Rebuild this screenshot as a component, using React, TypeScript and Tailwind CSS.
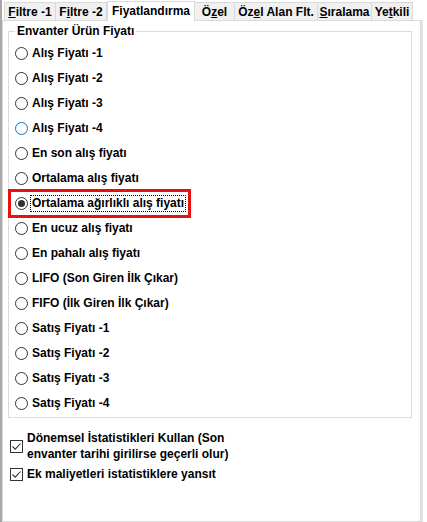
import React from "react";

const font = { fontFamily: '"Liberation Sans", Arial, sans-serif' };

const tabs: { label: React.ReactNode; w: string; active?: boolean }[] = [
    { label: <><u>F</u>iltre -1</>, w: "w-[52px]" },
    { label: <>F<u>i</u>ltre -2</>, w: "w-[52px]" },
    { label: <>Fiyatlandırma</>, w: "w-[88px]", active: true },
    { label: <>Ö<u>z</u>el</>, w: "w-[41px]" },
    { label: <>Öz<u>e</u>l Alan Flt.</>, w: "w-[84px]" },
    { label: <><u>S</u>ıralama</>, w: "w-[55px]" },
    { label: <>Ye<u>t</u>kili</>, w: "w-[42px]" },
];

const options = [
    "Alış Fiyatı -1",
    "Alış Fiyatı -2",
    "Alış Fiyatı -3",
    "Alış Fiyatı -4",
    "En son alış fiyatı",
    "Ortalama alış fiyatı",
    "Ortalama ağırlıklı alış fiyatı",
    "En ucuz alış fiyatı",
    "En pahalı alış fiyatı",
    "LIFO (Son Giren İlk Çıkar)",
    "FIFO (İlk Giren İlk Çıkar)",
    "Satış Fiyatı -1",
    "Satış Fiyatı -2",
    "Satış Fiyatı -3",
    "Satış Fiyatı -4",
];

const Radio = ({ checked, hover }: { checked?: boolean; hover?: boolean }) => (
    <span
        className={`flex items-center justify-center w-[13px] h-[13px] rounded-full border bg-white shrink-0 ${
            hover ? "border-[#0078d7]" : "border-[#333333]"
        }`}
    >
        {checked && <span className="w-[7px] h-[7px] rounded-full bg-[#333333]" />}
    </span>
);

const Check = () => (
    <span className="flex items-center justify-center w-[13px] h-[13px] border border-[#333333] bg-white shrink-0">
        <svg width="11" height="11" viewBox="0 0 11 11">
            <path d="M1.5 5.5 L4.2 8.2 L9.5 2.5" fill="none" stroke="#333333" strokeWidth="1.1" />
        </svg>
    </span>
);

export default function App() {
    return (
        <div className="w-[427px] h-[522px] bg-white flex text-black font-bold text-[12px]" style={font}>
            {/* left frame edge */}
            <div className="w-[2px] h-full bg-[#a8a8a8]" />

            <div className="w-[419px] flex flex-col">
                {/* Tab strip */}
                <div className="flex items-end h-[20px] pl-[3px]">
                    {tabs.map((t, i) =>
                        t.active ? (
                            <div
                                key={i}
                                className={`${t.w} h-[20px] -mb-px relative z-10 bg-white border border-b-0 border-[#d9d9d9] flex items-start justify-center pt-[2px] leading-[14px]`}
                            >
                                {t.label}
                            </div>
                        ) : (
                            <div
                                key={i}
                                className={`${t.w} h-[18px] bg-[#f0f0f0] border border-[#d9d9d9] border-b-0 -ml-px flex items-center justify-center leading-[14px]`}
                            >
                                {t.label}
                            </div>
                        )
                    )}
                </div>

                {/* Tab panel */}
                <div className="flex-1 border border-[#d9d9d9] bg-white flex flex-col pl-[5px] pr-[8px] pt-[10px]">
                    {/* Group box */}
                    <div className="relative border border-[#dcdcdc] h-[387px] pt-[9px]">
                        <span className="absolute -top-[8px] left-[6px] bg-white px-[2px] leading-[14px]">
                            Envanter Ürün Fiyatı
                        </span>
                        <div className="flex flex-col">
                            {options.map((o, i) => {
                                const selected = i === 6;
                                return (
                                    <div key={o} className="h-[25px] flex items-center">
                                        {selected ? (
                                            <div className="flex items-center gap-[2px] -ml-px h-[29px] w-[183px] border-[3px] border-[#e81010] pl-[4px]">
                                                <Radio checked />
                                                <span className="border border-dotted border-black px-px leading-[15px]">
                                                    {o}
                                                </span>
                                            </div>
                                        ) : (
                                            <div className="flex items-center gap-[4px] pl-[6px]">
                                                <Radio hover={i === 3} />
                                                <span className="leading-[15px]">{o}</span>
                                            </div>
                                        )}
                                    </div>
                                );
                            })}
                        </div>
                    </div>

                    {/* Checkboxes */}
                    <div className="flex items-center gap-[4px] mt-[12px] pl-[2px]">
                        <Check />
                        <span className="leading-[16px]">
                            Dönemsel İstatistikleri Kullan (Son
                            <br />
                            envanter tarihi girilirse geçerli olur)
                        </span>
                    </div>
                    <div className="flex items-center gap-[4px] mt-[4px] pl-[2px]">
                        <Check />
                        <span className="leading-[16px]">Ek maliyetleri istatistiklere yansıt</span>
                    </div>
                </div>
            </div>

            {/* right frame edge */}
            <div className="w-[2px] h-full bg-[#e3e3e3] mt-[20px]" />
        </div>
    );
}
